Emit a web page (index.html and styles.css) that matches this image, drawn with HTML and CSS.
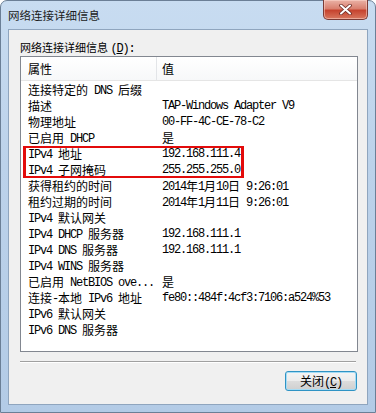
FILE: index.html
```html
<!DOCTYPE html>
<html lang="zh-CN">

<head>
    <meta charset="UTF-8">
    <title>网络连接详细信息</title>
    <link rel="stylesheet" href="styles.css">
</head>

<body>
    <div class="window">
        <div class="titlebar">
            <span class="title">网络连接详细信息</span>
            <button class="close-x" aria-label="关闭">
                <svg width="13" height="11" viewBox="0 0 13 11">
                    <path d="M2 1.5 L11 9.5 M11 1.5 L2 9.5" stroke="#6a2a24" stroke-width="3.6" stroke-linecap="round" />
                    <path d="M2 1.5 L11 9.5 M11 1.5 L2 9.5" stroke="#ffffff" stroke-width="2" stroke-linecap="round" />
                </svg>
            </button>
        </div>
        <div class="client">
            <div class="label">网络连接详细信息 <span class="en">(<u>D</u>):</span></div>
            <div class="list">
                <div class="list-head">
                    <div class="col-name">属性</div>
                    <div class="col-value">值</div>
                </div>
                <div class="list-body">
                    <div class="row"><span>连接特定的<span class="en"> DNS </span>后缀</span><span></span></div>
                    <div class="row"><span>描述</span><span class="en">TAP-Windows Adapter V9</span></div>
                    <div class="row"><span>物理地址</span><span class="en">00-FF-4C-CE-78-C2</span></div>
                    <div class="row"><span>已启用<span class="en"> DHCP</span></span><span>是</span></div>
                    <div class="mark">
                        <div class="row"><span><span class="en">IPv4 </span>地址</span><span class="en">192.168.111.4</span></div>
                        <div class="row"><span><span class="en">IPv4 </span>子网掩码</span><span class="en">255.255.255.0</span></div>
                    </div>
                    <div class="row"><span>获得租约的时间</span><span><span class="en">2014</span>年<span class="en">1</span>月<span class="en">10</span>日<span class="en"> 9:26:01</span></span></div>
                    <div class="row"><span>租约过期的时间</span><span><span class="en">2014</span>年<span class="en">1</span>月<span class="en">11</span>日<span class="en"> 9:26:01</span></span></div>
                    <div class="row"><span><span class="en">IPv4 </span>默认网关</span><span></span></div>
                    <div class="row"><span><span class="en">IPv4 DHCP </span>服务器</span><span class="en">192.168.111.1</span></div>
                    <div class="row"><span><span class="en">IPv4 DNS </span>服务器</span><span class="en">192.168.111.1</span></div>
                    <div class="row"><span><span class="en">IPv4 WINS </span>服务器</span><span></span></div>
                    <div class="row"><span>已启用<span class="en"> NetBIOS ove...</span></span><span>是</span></div>
                    <div class="row"><span>连接<span class="en">-</span>本地<span class="en"> IPv6 </span>地址</span><span class="en">fe80::484f:4cf3:7106:a524%53</span></div>
                    <div class="row"><span><span class="en">IPv6 </span>默认网关</span><span></span></div>
                    <div class="row"><span><span class="en">IPv6 DNS </span>服务器</span><span></span></div>
                </div>
            </div>
            <div class="separator"></div>
            <div class="actions">
                <button class="btn">关闭<span class="en">(<u>C</u>)</span></button>
            </div>
        </div>
    </div>
</body>

</html>
```

FILE: styles.css
```css
body {
    margin: 0;
    padding: 0;
    width: 376px;
    height: 413px;
    overflow: hidden;
    background: #ffffff;
    font-family: "Noto Sans CJK SC", sans-serif;
    color: #000;
}

.window {
    box-sizing: border-box;
    width: 376px;
    height: 413px;
    display: flex;
    flex-direction: column;
    padding: 0 7px 7px 7px;
    border: 1px solid #6b7f96;
    border-radius: 7px 7px 0 0;
    background: linear-gradient(#c8dcf1, #bcd2ea 40%, #b3cbe6);
}

.titlebar {
    height: 28px;
    display: flex;
    align-items: center;
    justify-content: space-between;
}

.title {
    font-size: 11.5px;
    line-height: 16px;
    color: #1b1b1b;
}

.close-x {
    align-self: flex-start;
    margin-top: -1px;
    width: 45px;
    height: 20px;
    padding: 0;
    display: flex;
    align-items: center;
    justify-content: center;
    border: 1px solid #7a3b36;
    border-top: none;
    border-radius: 0 0 5px 5px;
    background: linear-gradient(#eab2a6, #d9806f 45%, #c6442f 55%, #d8775f);
    box-shadow: inset 0 0 0 1px rgba(255, 220, 210, 0.5);
}

.client {
    flex: 1;
    display: flex;
    flex-direction: column;
    background: #f0f0f0;
    border: 1px solid #8fa5be;
    padding: 9px 9px 0 11px;
}

.label {
    font-size: 11px;
    line-height: 16px;
    height: 16px;
    margin-bottom: 1px;
}

.en {
    font-family: "Liberation Mono", monospace;
    font-size: 12px;
    line-height: 1;
    letter-spacing: -1.2px;
}

.list {
    height: 296px;
    box-sizing: border-box;
    background: #ffffff;
    border: 1px solid #828790;
    font-size: 12px;
}

.list-head {
    display: flex;
    height: 23px;
    align-items: center;
    background: linear-gradient(#ffffff, #f7f8f9);
    border-bottom: 1px solid #e5e5e5;
}

.col-name {
    width: 128px;
    padding-left: 7px;
    line-height: 23px;
    border-right: 1px solid #e3e5e8;
}

.col-value {
    padding-left: 5px;
}

.list-body {
    padding-top: 1px;
}

.row {
    display: grid;
    grid-template-columns: 134px 1fr;
    padding-left: 7px;
    height: 16px;
    line-height: 16px;
    white-space: nowrap;
    overflow: hidden;
}

.row > span {
    line-height: 16px;
}

.row span .en {
    vertical-align: 1px;
}

.mark {
    position: relative;
}

.mark::after {
    content: "";
    position: absolute;
    left: 2px;
    top: 0;
    width: 215px;
    height: 28px;
    border: 2px solid #e30b0b;
    border-left-width: 3px;
    border-right-width: 3px;
}

.separator {
    margin-top: 9px;
    height: 1px;
    background: #a0a0a0;
    border-bottom: 1px solid #ffffff;
    margin-right: 2px;
}

.actions {
    display: flex;
    justify-content: flex-end;
    margin-top: 8px;
    padding-right: 1px;
}

.btn {
    width: 72px;
    height: 20px;
    padding: 0;
    font-family: "Noto Sans CJK SC", sans-serif;
    font-size: 12px;
    line-height: 16px;
    color: #000;
    border: 1px solid #2f93c4;
    border-radius: 3px;
    background: linear-gradient(#f4f4f4, #ececec 48%, #dcdcdc 52%, #cfcfcf);
    box-shadow: inset 0 0 0 1px #a6dcf5;
}
```
